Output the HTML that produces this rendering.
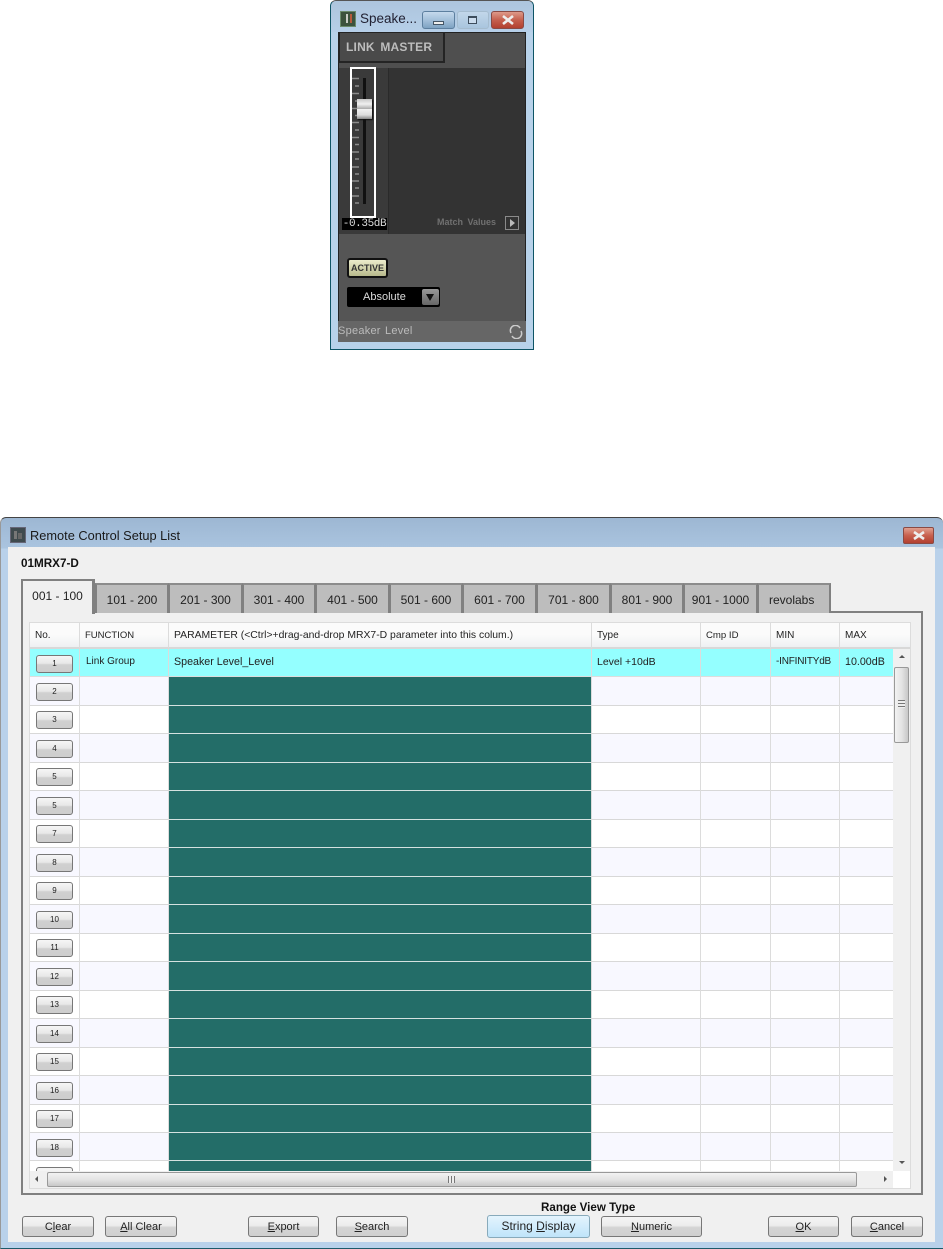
<!DOCTYPE html>
<html><head><meta charset="utf-8"><style>
html,body{margin:0;padding:0;background:#fff}
body{position:relative;width:943px;height:1249px;overflow:hidden;font-family:"Liberation Sans",sans-serif;color:#111}
div{position:absolute;box-sizing:border-box}
.t{white-space:nowrap;font-size:10px;line-height:12px;color:#222}
.tab{top:583px;height:30px;background:#bdbdbd;border:3px solid #808080;border-top:2px solid #8c8c8c;border-bottom:none;border-left-width:2px;border-right-width:2px;font-size:12px;color:#222;text-align:center;line-height:30px;white-space:nowrap}
.row{left:30px;width:863px;height:28px;background:#fff;border-bottom:1px solid #d8d8d8}
.alt{background:#f8f8ff}
.vl{top:649px;width:1px;height:522px;background:#dcdcdc}
.ln{left:169px;width:422px;height:1px;background:#d4e2e0}
.nb{left:36px;width:37px;height:18px;border:1px solid #777;border-radius:3px;background:linear-gradient(#f6f6f6,#e8e8e8 45%,#d0d0d0 55%,#cdcdcd);text-align:center;font-size:8px;line-height:15px;color:#222}
.hd{top:623px;height:26px;background:linear-gradient(#fbfbfb,#fbfbfb 50%,#eef0f2);border-right:1px solid #dcdcdc;border-bottom:2px solid #d8d8d8;font-size:10px;line-height:26px;padding-left:5px;white-space:nowrap;color:#222}
.btn{top:1216px;height:21px;border:1px solid #777;border-radius:3px;background:linear-gradient(#f4f4f4,#ececec 45%,#d4d4d4 55%,#cfcfcf);text-align:center;font-size:11px;line-height:20px;color:#222;white-space:nowrap}
u{text-decoration:underline}
</style></head><body>

<!-- small window -->
<div style="left:330px;top:0;width:204px;height:350px;background:#b8d2ea;border:1px solid #0f5566;border-left-color:#0f5566;border-top:1px solid #555;border-radius:6px 6px 0 0"></div>
<div style="left:331px;top:1px;width:202px;height:31px;background:linear-gradient(#adc5dd,#b6cfe8);border-radius:5px 5px 0 0"></div>
<div style="left:340px;top:11px;width:16px;height:16px;background:#3c523c;border:1px solid #6a8a6a"></div>
<div style="left:346px;top:14px;width:2px;height:9px;background:#c8ccc4"></div>
<div style="left:350px;top:14px;width:2px;height:9px;background:#b55a3a"></div>
<div class="t" style="left:360px;top:11px;font-size:13.5px;line-height:16px;color:#223">Speake...</div>
<div style="left:422px;top:11px;width:33px;height:18px;border:1px solid #5d7f9f;border-radius:3px;background:linear-gradient(#c5d9ec,#a4c0da 50%,#7ea2c2)"></div>
<div style="left:433px;top:21px;width:11px;height:4px;background:#eee;border:1px solid #456"></div>
<div style="left:457px;top:11px;width:32px;height:18px;border:1px solid #a5bccf;border-radius:3px;background:linear-gradient(#c2d7ea,#a9c5de)"></div>
<div style="left:468px;top:16px;width:9px;height:8px;border:1px solid #3d4d5d;border-top-width:2px;background:#cde"></div>
<div style="left:491px;top:11px;width:33px;height:18px;border:1px solid #8a4a44;border-radius:3px;background:linear-gradient(#dd9a8a,#c5604e 50%,#b2402f)"></div>
<svg style="position:absolute;left:501px;top:14px" width="14" height="12"><path d="M2 2L12 10M12 2L2 10" stroke="#eee" stroke-width="2.6"/></svg>

<div style="left:338px;top:32px;width:188px;height:310px;background:#555;border:1px solid #222"></div>
<div style="left:339px;top:33px;width:186px;height:36px;background:#4f4f4f"></div>
<div style="left:338px;top:32px;width:107px;height:31px;background:#4a4a4a;border:2px solid #242424;border-top:1px solid #242424"></div>
<div class="t" style="left:346px;top:40px;font-size:12px;line-height:14px;font-weight:bold;color:#bdbdbd;letter-spacing:.2px;word-spacing:2px">LINK MASTER</div>
<div style="left:339px;top:68px;width:186px;height:166px;background:#333"></div>
<div style="left:339px;top:68px;width:50px;height:166px;background:#3a3a3a;border-right:1px solid #2a2a2a"></div>
<div style="left:350px;top:67px;width:26px;height:151px;border:2px solid #fff"></div>
<div style="left:363px;top:78px;width:3px;height:126px;background:#111"></div>
<svg style="position:absolute;left:352px;top:76px" width="12" height="130"><g stroke="#8c8c8c" stroke-width="1.4"><path d="M0 2.5H7M3 10H7M0 17.5H7M3 25H7M0 32.5H7M3 39.5H7M0 46.5H7M3 54H7M0 61.5H7M3 68.5H7M0 76H7M3 83H7M0 91H7M3 98H7M0 105H7M3 112H7M0 120H7M3 127H7"/></g></svg>
<div style="left:357px;top:99px;width:15px;height:10px;background:linear-gradient(#c8c8c8,#f0f0f0 50%,#aaa);box-shadow:1px 1px 1px #111"></div>
<div style="left:357px;top:109px;width:15px;height:10px;background:linear-gradient(#f2f2f2,#ddd 60%,#888);box-shadow:1px 1px 1px #111"></div>
<div style="left:342px;top:218px;width:45px;height:12px;background:#000;color:#ddd;font:11px/12px 'Liberation Mono',monospace;text-align:center;letter-spacing:-.4px;white-space:nowrap">-0.35dB</div>
<div class="t" style="left:437px;top:217px;font-size:9px;line-height:11px;font-weight:bold;color:#707070;word-spacing:2px">Match Values</div>
<div style="left:505px;top:216px;width:14px;height:14px;border:1px solid #8a8a8a"></div>
<div style="left:510px;top:219px;border-left:5px solid #bbb;border-top:4px solid transparent;border-bottom:4px solid transparent"></div>
<div style="left:347px;top:258px;width:41px;height:20px;border-radius:3px;background:linear-gradient(#ececcc,#b7b98c);border:2px solid #111;font-size:9px;font-weight:bold;line-height:16px;text-align:center;color:#333">ACTIVE</div>
<div style="left:347px;top:287px;width:93px;height:20px;border-radius:2px;background:#000;color:#ddd;font-size:11px;line-height:20px;padding-left:16px">Absolute</div>
<div style="left:422px;top:289px;width:17px;height:16px;background:linear-gradient(#999,#666);border-radius:2px"></div>
<div style="left:426px;top:294px;border-top:7px solid #111;border-left:4px solid transparent;border-right:4px solid transparent"></div>
<div style="left:338px;top:321px;width:188px;height:21px;background:#666"></div>
<div class="t" style="left:338px;top:325px;font-size:11px;line-height:13px;color:#bbb;letter-spacing:.25px;word-spacing:1px">Speaker Level</div>
<svg style="position:absolute;left:509px;top:325px" width="14" height="14"><path d="M2 8A5 5 0 0 1 11 3M12 6A5 5 0 0 1 3 11" stroke="#ccc" stroke-width="1.5" fill="none"/></svg>

<!-- dialog -->
<div style="left:0;top:517px;width:943px;height:732px;background:linear-gradient(#9db7d3,#aac4df 30px,#b9d1ea 31px);border-top:1px solid #444;border-left:1px solid #999;border-bottom:1px solid #1d5a6a;border-radius:6px 6px 0 0"></div>
<div style="left:10px;top:527px;width:16px;height:16px;background:#3f4a4e;border:1px solid #667"></div>
<div style="left:14px;top:531px;width:3px;height:8px;background:#777"></div>
<div style="left:18px;top:533px;width:4px;height:6px;background:#666"></div>
<div class="t" style="left:30px;top:528px;font-size:12.8px;line-height:15px;color:#1a1a1a">Remote Control Setup List</div>
<div style="left:903px;top:527px;width:31px;height:17px;border:1px solid #8a4a44;border-radius:2px;background:linear-gradient(#e0a090,#c8604e 50%,#b24030)"></div>
<svg style="position:absolute;left:912px;top:530px" width="14" height="11"><path d="M2 2L12 9M12 2L2 9" stroke="#eee" stroke-width="2.6"/></svg>
<div style="left:8px;top:547px;width:927px;height:695px;background:#f0f0f0"></div>
<div class="t" style="left:21px;top:557px;font-size:11.7px;line-height:13px;font-weight:bold;color:#111">01MRX7-D</div>

<!-- tab frame -->
<div style="left:21px;top:611px;width:902px;height:584px;border:2px solid #808080;background:#f0f0f0"></div>
<div class="tab" style="left:95px;width:74px">101 - 200</div>
<div class="tab" style="left:168px;width:75px">201 - 300</div>
<div class="tab" style="left:242px;width:74px">301 - 400</div>
<div class="tab" style="left:315px;width:75px">401 - 500</div>
<div class="tab" style="left:389px;width:74px">501 - 600</div>
<div class="tab" style="left:462px;width:75px">601 - 700</div>
<div class="tab" style="left:536px;width:75px">701 - 800</div>
<div class="tab" style="left:610px;width:74px">801 - 900</div>
<div class="tab" style="left:683px;width:75px">901 - 1000</div>
<div class="tab" style="left:757px;width:74px;text-align:left;padding-left:10px">revolabs</div>
<div class="tab" style="left:21px;top:579px;width:74px;height:35px;background:#f0f0f0;border-top:2px solid #808080;border-right-width:3px;line-height:30px">001 - 100</div>
<div style="left:23px;top:611px;width:69px;height:3px;background:#f0f0f0"></div>

<!-- table -->
<div style="left:29px;top:622px;width:882px;height:567px;background:#fff;border:1px solid #dcdcdc"></div>
<div class="hd" style="left:30px;width:50px">No.</div>
<div class="hd" style="left:80px;width:89px;font-size:9.5px">FUNCTION</div>
<div class="hd" style="left:169px;width:423px;font-size:10.4px">PARAMETER (&lt;Ctrl&gt;+drag-and-drop MRX7-D parameter into this colum.)</div>
<div class="hd" style="left:592px;width:109px">Type</div>
<div class="hd" style="left:701px;width:70px;font-size:9.6px">Cmp ID</div>
<div class="hd" style="left:771px;width:69px">MIN</div>
<div class="hd" style="left:840px;width:70px;border-right:none">MAX</div>

<div class="row" style="top:649px;background:#94ffff;border-bottom-color:#ddd"></div>
<div class="row alt" style="top:677px;height:29px"></div>
<div class="row" style="top:706px"></div>
<div class="row alt" style="top:734px;height:29px"></div>
<div class="row" style="top:763px"></div>
<div class="row alt" style="top:791px;height:29px"></div>
<div class="row" style="top:820px"></div>
<div class="row alt" style="top:848px;height:29px"></div>
<div class="row" style="top:877px"></div>
<div class="row alt" style="top:905px;height:29px"></div>
<div class="row" style="top:934px"></div>
<div class="row alt" style="top:962px;height:29px"></div>
<div class="row" style="top:991px"></div>
<div class="row alt" style="top:1019px;height:29px"></div>
<div class="row" style="top:1048px"></div>
<div class="row alt" style="top:1076px;height:29px"></div>
<div class="row" style="top:1105px"></div>
<div class="row alt" style="top:1133px;height:28px"></div>
<div class="row" style="top:1161px;height:10px;border:none"></div>

<div class="vl" style="left:79px"></div>
<div class="vl" style="left:168px"></div>
<div class="vl" style="left:591px"></div>
<div class="vl" style="left:700px"></div>
<div class="vl" style="left:770px"></div>
<div class="vl" style="left:839px"></div>

<!-- teal parameter cells -->
<div style="left:169px;top:677px;width:422px;height:494px;background:#236d68"></div>
<div class="ln" style="top:705px"></div>
<div class="ln" style="top:733px"></div>
<div class="ln" style="top:762px"></div>
<div class="ln" style="top:790px"></div>
<div class="ln" style="top:819px"></div>
<div class="ln" style="top:847px"></div>
<div class="ln" style="top:876px"></div>
<div class="ln" style="top:904px"></div>
<div class="ln" style="top:933px"></div>
<div class="ln" style="top:961px"></div>
<div class="ln" style="top:990px"></div>
<div class="ln" style="top:1018px"></div>
<div class="ln" style="top:1047px"></div>
<div class="ln" style="top:1075px"></div>
<div class="ln" style="top:1104px"></div>
<div class="ln" style="top:1132px"></div>
<div class="ln" style="top:1160px"></div>

<div class="nb" style="top:655px">1</div>
<div class="nb" style="top:683px">2</div>
<div class="nb" style="top:711px">3</div>
<div class="nb" style="top:740px">4</div>
<div class="nb" style="top:768px">5</div>
<div class="nb" style="top:797px">5</div>
<div class="nb" style="top:825px">7</div>
<div class="nb" style="top:854px">8</div>
<div class="nb" style="top:882px">9</div>
<div class="nb" style="top:911px">10</div>
<div class="nb" style="top:939px">11</div>
<div class="nb" style="top:968px">12</div>
<div class="nb" style="top:996px">13</div>
<div class="nb" style="top:1025px">14</div>
<div class="nb" style="top:1053px">15</div>
<div class="nb" style="top:1082px">16</div>
<div class="nb" style="top:1110px">17</div>
<div class="nb" style="top:1139px">18</div>
<div style="left:36px;top:1167px;width:37px;height:4px;border:1px solid #777;border-bottom:none;border-radius:3px 3px 0 0;background:#f4f4f4"></div>

<div class="t" style="left:86px;top:656px">Link Group</div>
<div class="t" style="left:174px;top:656px;font-size:10.7px">Speaker Level_Level</div>
<div class="t" style="left:597px;top:656px;font-size:10.5px">Level +10dB</div>
<div class="t" style="left:776px;top:656px;letter-spacing:-.2px">-INFINITYdB</div>
<div class="t" style="left:845px;top:656px;font-size:10.7px">10.00dB</div>

<!-- v scrollbar -->
<div style="left:893px;top:649px;width:17px;height:522px;background:#f0f0f0"></div>
<div style="left:899px;top:655px;border-bottom:3px solid #555;border-left:3px solid transparent;border-right:3px solid transparent"></div>
<div style="left:894px;top:667px;width:15px;height:76px;border:1px solid #999;border-radius:2px;background:linear-gradient(90deg,#f2f2f2,#e4e4e4 50%,#c8c8c8)"></div>
<div style="left:898px;top:700px;width:7px;height:8px;background:repeating-linear-gradient(#777 0,#777 1px,#eee 1px,#eee 3px)"></div>
<div style="left:899px;top:1161px;border-top:3px solid #555;border-left:3px solid transparent;border-right:3px solid transparent"></div>
<!-- h scrollbar -->
<div style="left:30px;top:1171px;width:863px;height:17px;background:#f0f0f0"></div>
<div style="left:35px;top:1176px;border-right:3px solid #555;border-top:3px solid transparent;border-bottom:3px solid transparent"></div>
<div style="left:47px;top:1172px;width:810px;height:15px;border:1px solid #999;border-radius:2px;background:linear-gradient(#f2f2f2,#e4e4e4 50%,#c8c8c8)"></div>
<div style="left:448px;top:1176px;width:7px;height:7px;background:repeating-linear-gradient(90deg,#777 0,#777 1px,#eee 1px,#eee 3px)"></div>
<div style="left:884px;top:1176px;border-left:3px solid #555;border-top:3px solid transparent;border-bottom:3px solid transparent"></div>

<!-- bottom buttons -->
<div class="btn" style="left:22px;width:72px">C<u>l</u>ear</div>
<div class="btn" style="left:105px;width:72px"><u>A</u>ll Clear</div>
<div class="btn" style="left:248px;width:71px"><u>E</u>xport</div>
<div class="btn" style="left:336px;width:72px"><u>S</u>earch</div>
<div class="t" style="left:541px;top:1201px;font-size:11.6px;line-height:13px;font-weight:bold;color:#111">Range View Type</div>
<div class="btn" style="left:487px;top:1215px;width:103px;height:23px;border-color:#8ab;background:linear-gradient(#e4f4fd,#bfe4fa);font-size:12px;line-height:20px">String <u>D</u>isplay</div>
<div class="btn" style="left:601px;width:101px"><u>N</u>umeric</div>
<div class="btn" style="left:768px;width:71px"><u>O</u>K</div>
<div class="btn" style="left:851px;width:72px;border:1px dotted #000;outline:1px solid #777;outline-offset:-1px"><u>C</u>ancel</div>
</body></html>
